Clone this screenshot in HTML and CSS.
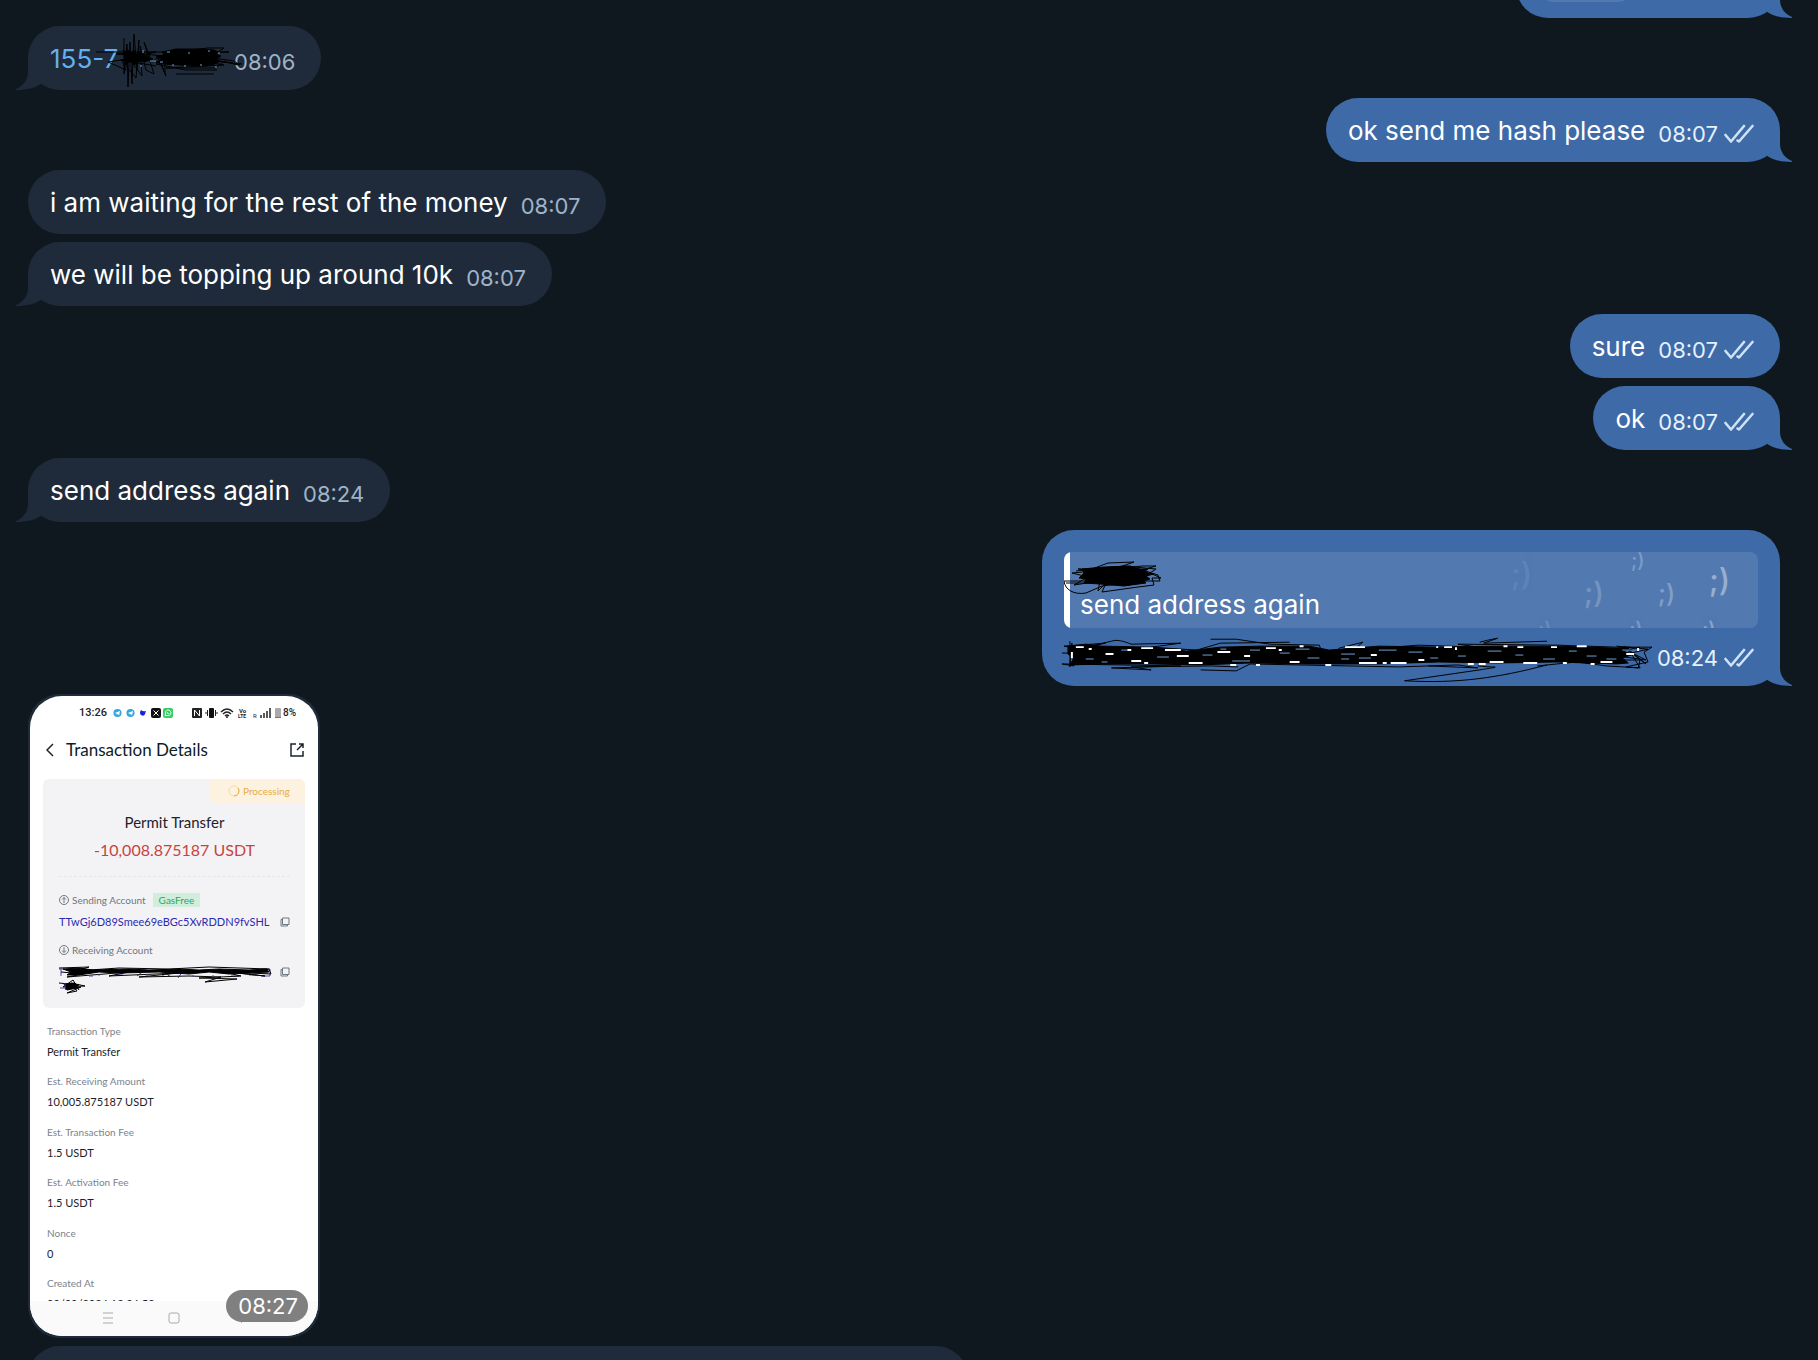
FILE: index.html
```html
<!DOCTYPE html>
<html lang="en">
<head>
<meta charset="utf-8">
<title>Chat</title>
<meta name="viewport" content="width=device-width, initial-scale=1">
<link rel="stylesheet" href="styles.css">
</head>
<body>
<svg class="defs" aria-hidden="true">
  <symbol id="tail" viewBox="0 0 32 32"><path d="M0 0H20V14C20 22 25 28 32 31V32C21 32 12 30 6 25L0 22Z"/></symbol>
  <symbol id="checks" viewBox="0 0 30 20"><path d="M1.500 11 7 17.500 20 2M13.500 16.500 15 17.500 28.500 2" fill="none" stroke="currentColor" stroke-width="2.600" stroke-linecap="round" stroke-linejoin="round"/></symbol>
  <symbol id="copy" viewBox="0 0 10 10"><path d="M2.500 1H9V7.500H2.500ZM2.500 2.500H1V9H7.500V7.500" fill="none" stroke="currentColor"/></symbol>
  <symbol id="plane" viewBox="0 0 10 10"><circle cx="5" cy="5" r="4.500" fill="#37a6de"/><path d="M2 5 7.800 2.800 6.800 7.500 5 6.200 4.200 7 4 5.600Z" fill="#fff"/></symbol>
</svg>
<main class="chat">
  <article class="bubble out partial-top"><div class="chip"></div><svg class="tail"><use href="#tail"/></svg></article>

  <article class="bubble in">
    <a class="text phone" href="#">155-7<svg class="scribble" viewBox="0 0 146 58" aria-hidden="true">
      <path class="blot" d="M66 20 76 18 80 17 105 17 118 18 122 20 120 22 125 24 120 27 124 29 119 32 110 34 84 33 68 32 60 30 66 27 60 25 68 23Z"/>
      <path class="blot" d="M28 20 32 18 34 22 38 18 40 23 46 19 48 24 57 27 48 30 44 29 38 33 34 29 30 33Z"/>
      <path d="M0 20H60L20 22 52 24 12 30 30 38 26 28 60 20 133 20 90 22 138 29 144 33 120 28 60 32 90 38 121 38M80 42 118 42M69 42V30L78 20 112 16 128 16 122 20M28 6V42L31 12 32 55 34 10 36 52 38 2 41 38 43 8 40 46 30 34 27 18 46 44 44 14 50 38 58 42 48 10 56 30 62 26 70 44 64 28M48 22 146 32M24 28 60 34M112 30 128 33 70 36 120 36 128 29 142 33"/>
      <path class="blue-bits" d="M64 30H67M71 20H74M92 21H94M112 19H114M119 35H121M88 34H90M54 29H60M47 18V21M44 34H46M76 33H78M122 21H124M104 33H106"/>
    </svg></a>
    <time>08:06</time><svg class="tail"><use href="#tail"/></svg>
  </article>

  <article class="bubble out"><span class="text">ok send me hash please</span><time>08:07</time><svg class="checks"><use href="#checks"/></svg><svg class="tail"><use href="#tail"/></svg></article>
  <article class="bubble in"><span class="text">i am waiting for the rest of the money</span><time>08:07</time></article>
  <article class="bubble in"><span class="text">we will be topping up around 10k</span><time>08:07</time><svg class="tail"><use href="#tail"/></svg></article>
  <article class="bubble out"><span class="text">sure</span><time>08:07</time><svg class="checks"><use href="#checks"/></svg></article>
  <article class="bubble out"><span class="text">ok</span><time>08:07</time><svg class="checks"><use href="#checks"/></svg><svg class="tail"><use href="#tail"/></svg></article>
  <article class="bubble in"><span class="text">send address again</span><time>08:24</time><svg class="tail"><use href="#tail"/></svg></article>

  <article class="bubble out with-reply">
    <blockquote class="reply">
      <svg class="wink" viewBox="0 0 250 76" aria-hidden="true">
        <text x="3" y="33" font-size="31" opacity=".08">;)</text>
        <text x="76" y="51" font-size="29" opacity=".2">;)</text>
        <text x="123" y="15" font-size="20" opacity=".25">;)</text>
        <text x="150" y="50" font-size="25" opacity=".28">;)</text>
        <text x="201" y="39" font-size="31" opacity=".4">;)</text>
        <text x="30" y="84" font-size="20" opacity=".15">;)</text>
        <text x="121" y="84" font-size="20" opacity=".25">;)</text>
        <text x="194" y="84" font-size="20" opacity=".32">;)</text>
      </svg>
      <svg class="name-scribble" viewBox="0 0 98 34" aria-hidden="true">
        <path class="blot" d="M18 8 40 6 66 5 76 8 84 8 80 11 90 13 82 15 86 18 80 20 82 22 60 25 36 23 20 22 22 18 15 17 20 12Z"/>
        <path d="M0 20H30M2 22H24M0 20C1 29 10 34 22 32L38 25 80 20 96 20 94 14 78 9 92 5 78 5 50 8 70 1 44 2 28 8 14 8 30 10 8 12 24 16 10 24 36 20 34 30 42 22 38 31 74 26 90 24 88 17 97 17 86 12 92 8 60 5 12 10"/>
      </svg>
      <p>send address again</p>
    </blockquote>
    <div class="line">
      <svg class="line-scribble" viewBox="0 0 596 44" aria-hidden="true">
        <path class="blot" d="M6 8 24 6 40 8 90 9 126 13 160 9 200 8 250 8 270 12 320 8 380 9 440 8 500 8 560 10 574 9 568 14 578 16 566 20 572 25 560 26 500 24 440 25 380 24 320 26 250 26 190 25 140 27 90 26 40 26 8 27 12 20 6 16Z"/>
        <path d="M0 15H40L2 8 44 5 20 10 50 3C56 1 62 3 70 6L120 5 90 9 136 12 160 5 230 4M150 1H176L210 6 260 7 266 26 280 10 304 4 294 12 360 7 420 9 400 6 500 7 560 9 596 9 588 14 592 24 570 29 582 30 584 22 566 22M8 3V29L10 5 12 28 0 26 60 27 120 28 50 30 90 32 70 29 150 28 178 29M140 32 176 33 190 26 240 27 290 28 340 29 400 27 420 30 370 28M420 28C440 30 446 28 422 32L346 43C400 46 440 40 490 27M422 4 430 2 440 0 426 5 490 3M480 28 520 24 550 28 584 30 574 14 590 26 568 8M560 8 592 11 562 18 590 22 570 12 584 9"/>
        <path class="white-bits" d="M14 9H22M27 11H30M44 16H52M70 23H80M83 25H87M104 12H120M128 25H142M157 14H170M184 18H190M206 10H216M219 12H222M230 24H240M240 8H244M266 27H272M286 9H306M312 17H318M332 25H348M360 22H366M378 9H380M386 9H394M410 26H416M421 26H428M446 8H450M466 25H480M494 9H500M520 8H530M544 24H556M80 10H92M116 18H128M170 27H176M196 27H200M300 25H318M324 25H328M432 24H446M570 16H578M66 12H70M460 9H466M506 25H510M534 26H538M398 12V9M10 14V20M582 10V13"/>
        <path class="blue-bits" d="M24 21H32M60 12H66M96 19H108M142 17H152M172 23H190M220 15H230M248 20H260M282 16H296M282 21H290M320 12H338M350 14H364M400 18H408M430 13H444M458 17H466M486 21H498M530 18H540M40 24H46M160 11H166M190 12H200M236 11H250M550 21H560M566 12H574M512 13H520M372 20H380M300 20H312"/>
      </svg>
      <time>08:24</time><svg class="checks"><use href="#checks"/></svg>
    </div>
    <svg class="tail"><use href="#tail"/></svg>
  </article>

  <article class="bubble in photo">
    <section class="screen">
      <div class="status">
        <span class="clock">13:26</span>
        <svg class="apps" viewBox="0 0 60 10" aria-hidden="true">
          <use href="#plane" width="9" height="10"/><use href="#plane" x="13" width="9" height="10"/>
          <path d="M28 2Q30 4 33 3L32 6Q31 9 28 7Q26 5 28 2Z" fill="#1523e0"/>
          <rect x="38" width="10" height="10" rx="2" fill="#111"/><path d="M40.500 2.500 45.500 7.500M45.500 2.500 40.500 7.500" stroke="#fff"/>
          <rect x="50" width="10" height="10" rx="2" fill="#35cf63"/><path d="M52 8 52.600 6A2.800 2.800 0 1 1 54 7.400ZM54 4Q54 6 56.500 6" fill="none" stroke="#fff" stroke-width=".9"/>
        </svg>
        <svg class="signals" viewBox="0 0 90 12" aria-hidden="true">
          <rect y="1" width="10" height="10" rx="1" fill="#222"/><path d="M2.500 9V3L7.500 9V3" fill="none" stroke="#fff"/>
          <rect x="17" y="1" width="5" height="10" rx="1" fill="#111"/><path d="M15.500 3V9M23.500 3V9M14 5V7M25 5V7" stroke="#222"/>
          <path d="M29 5Q35 -1 41 5M31 7Q35 3 39 7M33 9Q35 7 37 9" fill="none" stroke="#222" stroke-width="1.400"/><circle cx="35" cy="10" r="1" fill="#222"/>
          <text x="47" y="6" font-size="6" font-weight="700">Vo</text><text x="46" y="11" font-size="5" font-weight="700">LTE</text>
          <text x="61" y="11" font-size="6">R</text>
          <path d="M69 11V8M72 11V6M75 11V4M78 11V1" stroke="#222" stroke-width="1.500"/>
          <rect x="83" y="1" width="6" height="10" rx="1" fill="#aaa"/><path d="M83 10.500H89" stroke="#dd4a42"/>
        </svg>
        <span class="battery">8%</span>
      </div>
      <header class="top">
        <button class="icon" aria-label="Back"><svg viewBox="0 0 8 14"><path d="M7 1 1 7 7 13"/></svg></button>
        <h1>Transaction Details</h1>
        <button class="icon open" aria-label="Open in browser"><svg viewBox="0 0 14 14"><path d="M6 1H1V13H13V8M9 1H13V5M13 1 7 7"/></svg></button>
      </header>
      <div class="card">
        <div class="badge"><svg viewBox="0 0 12 12" aria-hidden="true"><circle cx="6" cy="6" r="5" stroke="#f6dba5"/><path d="M6 11A5 5 0 0 0 10 3" stroke="#e8ad37"/></svg>Processing</div>
        <h2>Permit Transfer</h2>
        <p class="amount">-10,008.875187 USDT</p>
        <div class="account">
          <p class="who"><svg viewBox="0 0 10 10" aria-hidden="true"><circle cx="5" cy="5" r="4.500"/><path d="M5 8V2.500M3 4.500 5 2.500 7 4.500"/></svg>Sending Account <span class="tag">GasFree</span></p>
          <p class="address"><a href="#">TTwGj6D89Smee69eBGc5XvRDDN9fvSHL</a><button class="copy" aria-label="Copy sending address"><svg><use href="#copy"/></svg></button></p>
        </div>
        <div class="account">
          <p class="who"><svg viewBox="0 0 10 10" aria-hidden="true"><circle cx="5" cy="5" r="4.500"/><path d="M5 2V7.500M3 5.500 5 7.500 7 5.500"/></svg>Receiving Account</p>
          <div class="address"><svg class="address-scribble" viewBox="0 0 213 28" aria-hidden="true">
            <path class="violet-bits" d="M2 3V10M0 3H6M56 9H64M78 10 86 4M104 10V4L110 10V4M119 12 124 5M172 10H180M190 9H198M202 3H211V10H202M204 7H209"/>
            <path class="blot" d="M4 3 20 2 34 4 70 3 90 4 120 3 140 4 160 3 190 4 208 3 210 6 190 7 170 8 150 6 130 8 100 6 60 7 40 6 20 9 8 9 12 6Z"/>
            <path d="M0 2 30 1 16 5 60 2 110 3 150 1 210 3 212 8 170 6 206 10 160 5 182 10 140 12 178 13 146 16 162 11 130 10 80 11 120 7 50 10 70 6 8 11 24 8 2 6M0 17 20 19 6 23 22 21 8 27 18 25 12 17 26 20 4 21 14 14 20 24"/>
            <path class="blot" d="M5 18 16 17 18 22 8 24Z"/><path class="violet-bits" d="M1 22H6V17M40 10V8M88 10V8M134 9V11M154 9V11M30 10H34"/>
          </svg><button class="copy" aria-label="Copy receiving address"><svg><use href="#copy"/></svg></button></div>
        </div>
      </div>
      <dl class="details">
        <dt>Transaction Type</dt><dd>Permit Transfer</dd>
        <dt>Est. Receiving Amount</dt><dd>10,005.875187 USDT</dd>
        <dt>Est. Transaction Fee</dt><dd>1.5 USDT</dd>
        <dt>Est. Activation Fee</dt><dd>1.5 USDT</dd>
        <dt>Nonce</dt><dd>0</dd>
        <dt>Created At</dt><dd>09/09/2024 13:26:52</dd>
      </dl>
      <div class="nav">
        <svg viewBox="0 0 12 12"><path d="M1 1H11M1 6H11M1 11H11"/></svg>
        <svg viewBox="0 0 12 12"><rect x="1" y="1" width="10" height="10" rx="2"/></svg>
        <svg viewBox="0 0 12 12"><path d="M8 1 3 6 8 11"/></svg>
      </div>
    </section>
    <time class="pill">08:27</time>
  </article>

  <article class="bubble in partial-bottom"></article>
</main>
</body>
</html>
```
FILE: styles.css
```css
* { box-sizing: border-box; }
body, h1, h2, p, dl, dd, blockquote { margin: 0; }
body { background: #10181f; font-family: Inter, "Liberation Sans", sans-serif; }
button { border: 0; padding: 0; background: none; color: inherit; }
a { text-decoration: none; color: inherit; }
svg { display: block; flex: none; }
.defs { position: absolute; width: 0; height: 0; }

.chat {
  height: 100vh;
  overflow: hidden;
  display: flex;
  flex-direction: column;
  gap: 8px;
  padding: 0 38px 0 28px;
}

/* bubbles */
.bubble {
  position: relative;
  flex: none;
  display: flex;
  align-items: flex-end;
  max-width: 80%;
  padding: 16px 26px 16px 22px;
  border-radius: 32px;
  font-size: 26px;
  line-height: 32px;
}
.text { line-height: 30px; }
.in { align-self: flex-start; background: #1f2b3a; color: #fff; }
.out { align-self: flex-end; background: #3e6aa8; color: #fff; }
.bubble:not(.photo, .with-reply) { height: 64px; }
.bubble time { margin-left: 13px; font-size: 22px; line-height: 24px; color: #9fb3c8; }
.out time { color: #e4f0fc; }
.tail { position: absolute; right: -12px; bottom: 0; width: 32px; height: 32px; fill: #3e6aa8; }
.in > .tail { right: auto; left: -12px; transform: scaleX(-1); fill: #1f2b3a; }
.checks { width: 30px; height: 20px; margin: 0 0 2px 6px; color: #cfe2f6; }
.partial-top { margin-top: -46px; }
.partial-top .chip { width: 96px; height: 32px; margin-right: 120px; border-radius: 16px; background: #5279b0; }
.partial-bottom { width: 940px; }

/* pen strokes over hidden words */
.blot { fill: #000; }
.phone { position: relative; width: 171px; color: #62b0f0; }
.scribble, .name-scribble, .line-scribble, .address-scribble { fill: none; stroke: #000; stroke-width: 1; overflow: visible; }
.scribble { position: absolute; left: 46px; top: -12px; width: 146px; height: 58px; }
.bubble .blue-bits { stroke: #6f9fd4; }
.bubble .white-bits { stroke: #fff; stroke-width: 2; }
.bubble .violet-bits { stroke: #4a49b5; }

/* quoted message */
.with-reply { display: block; width: 738px; padding: 22px 22px 16px; }
.reply {
  position: relative;
  overflow: hidden;
  margin-bottom: 10px;
  padding: 9px 16px 7px;
  border-radius: 8px;
  background: linear-gradient(90deg, #fff 6px, #5279b0 6px);
}
.name-scribble { width: 98px; height: 34px; margin: 0 0 -6px -16px; }
.wink { position: absolute; right: 0; top: 0; width: 250px; height: 76px; fill: #fff; font-weight: 500; }
.line { display: flex; align-items: flex-end; height: 32px; margin-right: 4px; }
.line-scribble { width: 590px; height: 44px; margin: 0 0 -12px -2px; }
.bubble .line time { margin-left: auto; }

/* shared phone screenshot */
.photo { display: block; padding: 2px; }
.screen {
  display: flex;
  flex-direction: column;
  width: 288px;
  height: 640px;
  overflow: hidden;
  border-radius: 32px;
  background: #fff;
  color: #1b232b;
  font-family: Lato, "Open Sans", sans-serif;
  font-size: 11px;
  line-height: 16px;
}
.status { display: flex; align-items: center; padding: 9px 21px 0 49px; font-family: Roboto, sans-serif; }
.clock { font-weight: 500; width: 34px; }
.apps { width: 60px; height: 10px; margin-right: 19px; }
.signals { width: 90px; height: 12px; fill: #222; }
.battery { margin-left: 1px; font-size: 10px; font-weight: 500; }
.top { display: flex; align-items: center; padding: 17px 14px 17px 16px; }
.top h1 { flex: 1; margin-left: 12px; font-size: 17px; line-height: 24px; font-weight: 400; color: #0d1c27; }
.icon svg { width: 8px; height: 14px; fill: none; stroke: #1b232b; stroke-width: 1.5; }
.open svg { width: 14px; }
.card { margin: 0 13px; height: 229px; padding: 0 15px 0 16px; overflow: hidden; border-radius: 6px; background: #f3f3f6; }
.badge { display: flex; align-items: center; gap: 3px; width: 95px; height: 24px; margin: 0 -15px 0 auto; padding-left: 18px; border-bottom-left-radius: 6px; background: #fdf1df; color: #e6ad45; font-size: 10px; }
.badge svg { width: 12px; height: 12px; fill: none; }
.card h2 { margin-top: 9px; text-align: center; font-size: 15px; line-height: 20px; font-weight: 400; }
.amount { padding: 6px 0 14px; text-align: center; font-size: 16px; line-height: 24px; color: #c8433c; border-bottom: 1px dashed #e6e6ea; }
.account { margin-top: 15px; font-size: 10px; }
.account + .account { margin-top: 12px; }
.who { display: flex; align-items: center; color: #6e7780; }
.who svg { width: 10px; height: 10px; margin-right: 3px; fill: none; stroke: #6e7780; }
.tag { margin-left: 7px; padding: 0 6px; line-height: 14px; background: #d0eedb; color: #2fa65d; }
.address { display: flex; justify-content: space-between; align-items: flex-start; margin-top: 6px; font-size: 11px; color: #2b2bb0; }
.copy svg { width: 10px; height: 10px; margin-top: 3px; color: #6e7780; }
.address-scribble { width: 213px; height: 28px; margin-top: 2px; }
.details { flex: 1; overflow: hidden; padding: 15px 17px 0; }
.details dt { font-size: 10px; line-height: 16px; color: #7a838c; }
.details dd { margin: 5px 0 13px; }
.details dd:nth-of-type(even) { margin-bottom: 14px; }
.nav { flex: none; display: flex; gap: 54px; height: 35px; padding: 11px 72px 0; background: #fafafa; }
.nav svg { width: 12px; height: 12px; fill: none; stroke: #aaa; }
.bubble .pill { position: absolute; right: 12px; bottom: 16px; padding: 0 10px 0 12px; border-radius: 16px; line-height: 32px; background: #808080; color: #fff; }
```
